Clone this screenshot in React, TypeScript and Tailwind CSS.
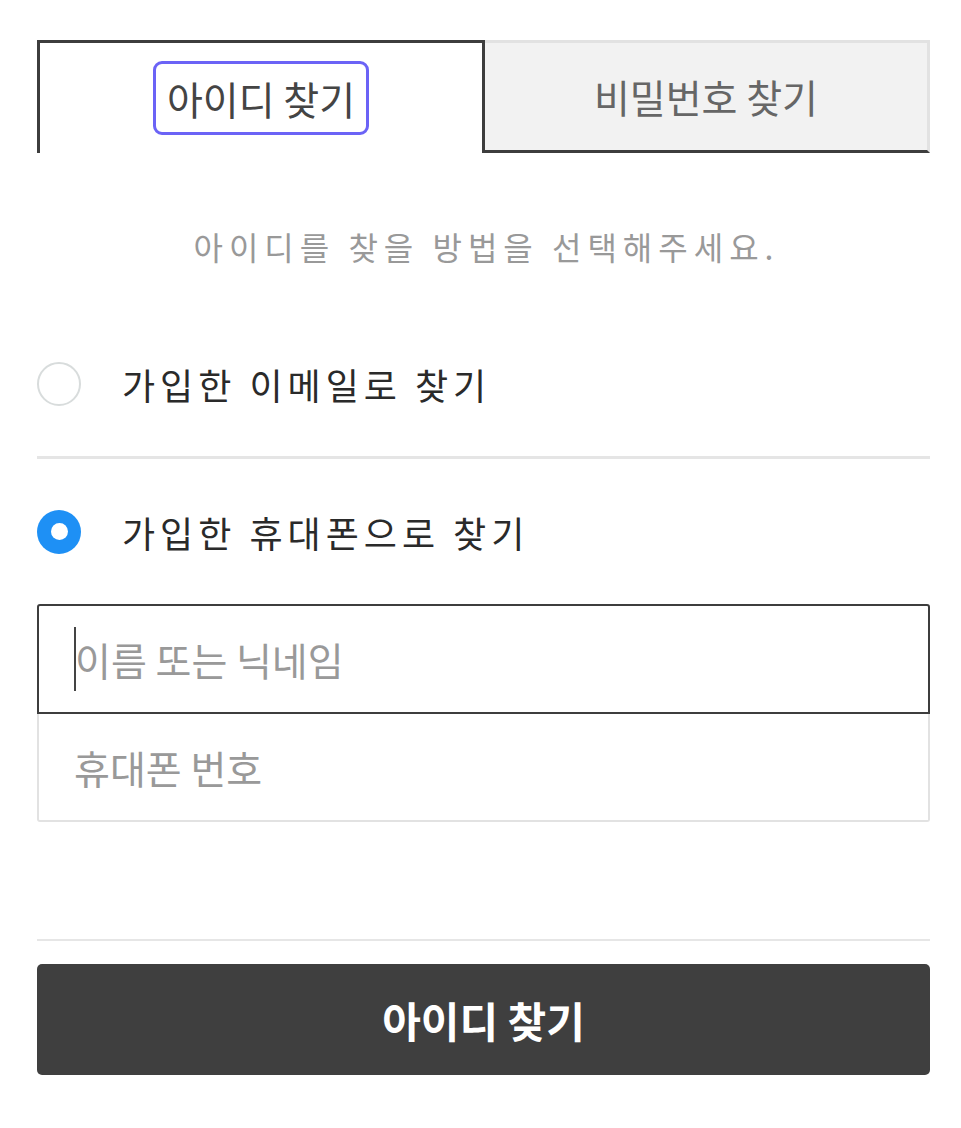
import React from "react";

const font = { fontFamily: '"Noto Sans CJK KR", "Noto Sans", sans-serif' };

export default function App() {
  return (
    <div className="w-[961px] h-[1128px] bg-white" style={font}>
      <div className="ml-[37px] w-[893px] pt-[40px]">
        {/* Tabs */}
        <div className="flex h-[113px]">
          <div className="flex-1 flex items-center justify-center border-t-[3px] border-l-[3px] border-r-[3px] border-[#3d3d3d] bg-white">
            <div className="rounded-[9px] border-[3px] border-[#6b63f6] px-[11px] h-[74px] flex items-center">
              <span className="text-[39px] text-[#444] leading-none">아이디 찾기</span>
            </div>
          </div>
          <div className="flex-1 flex items-center justify-center bg-[#f2f2f2] border-t-[3px] border-r-[3px] border-[#e2e2e2] border-b-[3px] border-b-[#3d3d3d]">
            <span className="text-[39px] text-[#666] leading-none">비밀번호 찾기</span>
          </div>
        </div>

        {/* Subtitle */}
        <div className="h-[180px] flex items-center justify-center">
          <p className="text-[32px] text-[#999] tracking-[6px] leading-none mt-[6px] ml-[6px]">
            아이디를 찾을 방법을 선택해주세요.
          </p>
        </div>

        {/* Radio 1 */}
        <div className="flex items-center h-[126px] border-b-[3px] border-[#e5e5e5] pb-[22px]">
          <div className="w-[44px] h-[44px] rounded-full border-[2px] border-[#d8dcdc] bg-white" />
          <span className="ml-[41px] text-[36px] text-[#2a2a2a] tracking-[5px] leading-none">
            가입한 이메일로 찾기
          </span>
        </div>

        {/* Radio 2 */}
        <div className="flex items-center h-[145px]">
          <div className="w-[44px] h-[44px] rounded-full bg-[#1e90f5] flex items-center justify-center">
            <div className="w-[17px] h-[17px] rounded-full bg-white" />
          </div>
          <span className="ml-[41px] text-[36px] text-[#2a2a2a] tracking-[5px] leading-none">
            가입한 휴대폰으로 찾기
          </span>
        </div>

        {/* Inputs */}
        <div className="flex flex-col">
          <div className="h-[110px] border-[2px] border-[#3d3d3d] rounded-t-[3px] flex items-center pl-[35px]">
            <div className="w-[2px] h-[64px] bg-[#444]" />
            <span className="text-[39px] text-[#999] leading-none -ml-[1px]">이름 또는 닉네임</span>
          </div>
          <div className="h-[108px] border-l-[2px] border-r-[2px] border-b-[2px] border-[#e2e2e2] rounded-b-[3px] flex items-center pl-[35px]">
            <span className="text-[39px] text-[#999] leading-none">휴대폰 번호</span>
          </div>
        </div>

        {/* Divider */}
        <div className="mt-[117px] h-[2px] bg-[#e6e6e6]" />

        {/* Button */}
        <button className="mt-[23px] w-full h-[111px] rounded-[5px] bg-[#3f3f3f] flex items-center justify-center">
          <span className="text-[42px] text-white font-bold leading-none">아이디 찾기</span>
        </button>
      </div>
    </div>
  );
}
